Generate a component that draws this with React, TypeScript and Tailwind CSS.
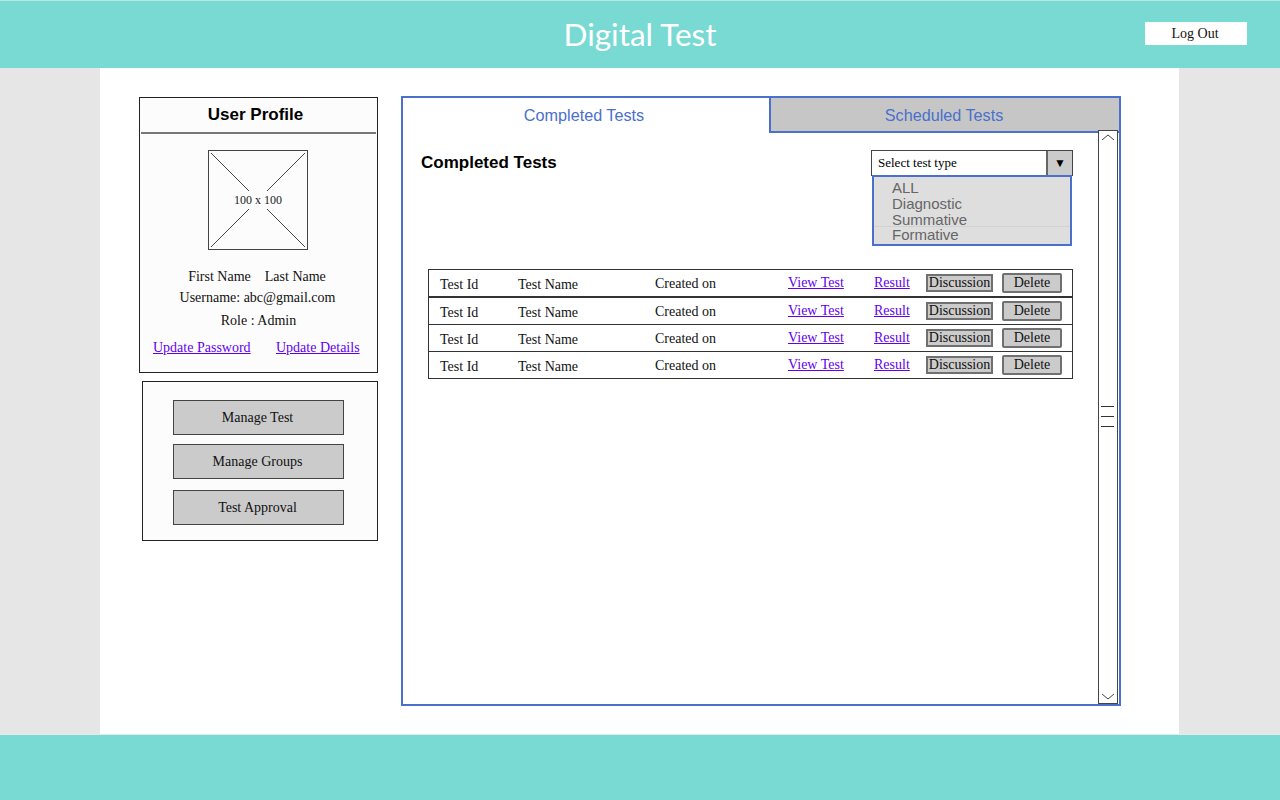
// Digital Test wireframe: admin dashboard with profile, side menu and tests panel
const ROWS = [0, 1, 2, 3];

const serif = 'font-["Liberation_Serif",serif]';
const sans = 'font-["Liberation_Sans",Arial,sans-serif]';

function TestRow({ index }: { index: number }) {
    // the first row sits a little apart from the others, as in the hand drawn original
    return (
        <div className={`flex h-[28px] w-[645px] items-center border border-[#333] pl-[11px] text-[14px] text-[#111] ${index > 1 ? '-mt-px' : ''}`}>
            <span className="w-[78px] pt-[2px]">Test Id</span>
            <span className="w-[137px] pt-[2px]">Test Name</span>
            <span className="w-[133px]">Created on</span>
            <a href="#" className="w-[86px] pb-[2px] text-[#6200ee] underline">View Test</a>
            <a href="#" className="w-[52px] pb-[2px] text-[#6200ee] underline">Result</a>
            <button className="h-[18px] w-[67px] border-2 border-[#707070] bg-[#cbcbcb] text-center text-[14px] leading-[14px] text-[#111]">
                Discussion
            </button>
            <button className="ml-[9px] h-[20px] w-[60px] rounded-[2px] border-2 border-[#707070] bg-[#cbcbcb] text-center text-[14px] leading-[16px] text-[#111]">
                Delete
            </button>
        </div>
    );
}

function MenuButton({ label, className }: { label: string; className?: string }) {
    return (
        <button className={`h-[35px] w-[171px] border border-[#444] bg-[#cbcbcb] pr-[2px] text-[14px] text-[#111] ${className ?? ''}`}>
            {label}
        </button>
    );
}

export default function App() {
    return (
        <div className={`h-[800px] w-[1280px] overflow-hidden bg-[#e6e6e6] ${serif}`}>
            {/* header */}
            <header className="relative flex h-[68px] items-center justify-center border-t border-[#b8e8e4] bg-[#79dad4]">
                <h1 className='font-["Lato",sans-serif] text-[31.5px] text-white'>Digital Test</h1>
                <button className="absolute left-[1145px] top-[21px] h-[23px] w-[102px] bg-white pr-[2px] text-[14px] text-[#111]">
                    Log Out
                </button>
            </header>

            {/* page body */}
            <div className="ml-[100px] flex h-[666px] w-[1079px] bg-white pl-[39px] pt-[28px]">
                {/* left column */}
                <aside className="w-[239px] pt-[1px]">
                    <section className="h-[276px] w-[239px] border border-[#222] bg-[#fcfcfc] text-center text-[14px] text-[#111]">
                        <div className={`mx-px h-[36px] border-b-2 border-[#777] pr-[6px] pt-[4px] text-[17px] font-bold text-black ${sans}`}>
                            User Profile
                        </div>
                        <div className="relative ml-[68px] mt-[16px] h-[100px] w-[100px] border border-[#444]">
                            <svg viewBox="0 0 100 100" className="absolute inset-0 h-full w-full">
                                <path d="M2 2 L98 98 M98 2 L2 98" stroke="#444" strokeWidth="1" fill="none" />
                            </svg>
                            <span className="absolute left-[22px] top-[40px] bg-[#fcfcfc] px-[3px] text-[12px] leading-[18px] text-[#222]">
                                100 x 100
                            </span>
                        </div>
                        <p className="mt-[17px] pr-[3px] leading-[20px]">First Name &nbsp;&nbsp; Last Name</p>
                        <p className="mt-[1px] pr-[2px] leading-[20px]">Username: abc@gmail.com</p>
                        <p className="mt-[3px] leading-[20px]">Role : Admin</p>
                        <div className="mt-[7px] flex pl-[13px] leading-[20px]">
                            <a href="#" className="w-[123px] text-left text-[#6200ee] underline">Update Password</a>
                            <a href="#" className="text-[#6200ee] underline">Update Details</a>
                        </div>
                    </section>

                    <section className="ml-[3px] mt-[8px] flex h-[160px] w-[236px] flex-col border border-[#222] bg-[#fcfcfc] pl-[30px] pt-[18px]">
                        <MenuButton label="Manage Test" />
                        <MenuButton label="Manage Groups" className="mt-[9px]" />
                        <MenuButton label="Test Approval" className="mt-[11px]" />
                    </section>
                </aside>

                {/* tests panel */}
                <main className="ml-[23px] flex h-[610px] w-[720px] flex-col border-2 border-[#4a70cc]">
                    <div className={`flex h-[35px] shrink-0 text-[16.2px] text-[#4a70cc] ${sans}`}>
                        <div className="flex w-[366px] items-center justify-center pr-[4px]">Completed Tests</div>
                        <div className="flex flex-1 items-center justify-center border-b-2 border-l-2 border-[#4a70cc] bg-[#c6c6c6] pr-[2px] pt-[1px]">
                            Scheduled Tests
                        </div>
                    </div>

                    <div className="flex min-h-0 flex-1">
                        <div className="w-[695px] pl-[18px]">
                            <div className="flex h-[112px]">
                                <h2 className={`w-[450px] pt-[18px] text-[17px] font-bold leading-[24px] text-black ${sans}`}>
                                    Completed Tests
                                </h2>
                                <div className="pt-[17px]">
                                    <div className="flex h-[26px] w-[202px] border border-[#444] bg-white">
                                        <span className="flex-1 pl-[6px] text-[13px] leading-[24px] text-black">Select test type</span>
                                        <span className="flex w-[26px] items-center justify-center border-l-2 border-[#666] bg-[#cbcbcb] text-[12px] text-black">
                                            ▼
                                        </span>
                                    </div>
                                    <ul className={`-mt-px ml-px h-[71px] w-[200px] border-2 border-[#4a70cc] bg-[#dedede] pl-[18px] text-[15px] leading-[16px] text-[#666] ${sans}`}>
                                        <li className="mt-[3px]">ALL</li>
                                        <li>Diagnostic</li>
                                        <li>Summative</li>
                                        <li className="-ml-[18px] -mt-[2px] border-t border-[#d2d2d2] pl-[18px]">Formative</li>
                                    </ul>
                                </div>
                            </div>

                            <div className="ml-[7px] mt-[24px]">
                                {ROWS.map((row) => (
                                    <TestRow key={row} index={row} />
                                ))}
                            </div>
                        </div>

                        {/* scrollbar */}
                        <div className="-mt-[3px] flex h-[574px] w-[20px] flex-col items-center justify-between border border-[#444] bg-white">
                            <svg width="14" height="8" viewBox="0 0 14 8" className="mt-[3px]">
                                <path d="M1 6 L7 1 L13 6" stroke="#444" fill="none" />
                            </svg>
                            <svg width="14" height="22" viewBox="0 0 14 22">
                                <path d="M0 0.5 H13 M0 10.5 H13 M0 20.5 H13" stroke="#333" fill="none" />
                            </svg>
                            <svg width="14" height="8" viewBox="0 0 14 8" className="mb-[3px]">
                                <path d="M1 2 L7 7 L13 2" stroke="#444" fill="none" />
                            </svg>
                        </div>
                    </div>
                </main>
            </div>

            {/* footer */}
            <footer className="h-[66px] border-t border-[#dfeeed] bg-[#79dad4]" />
        </div>
    );
}
